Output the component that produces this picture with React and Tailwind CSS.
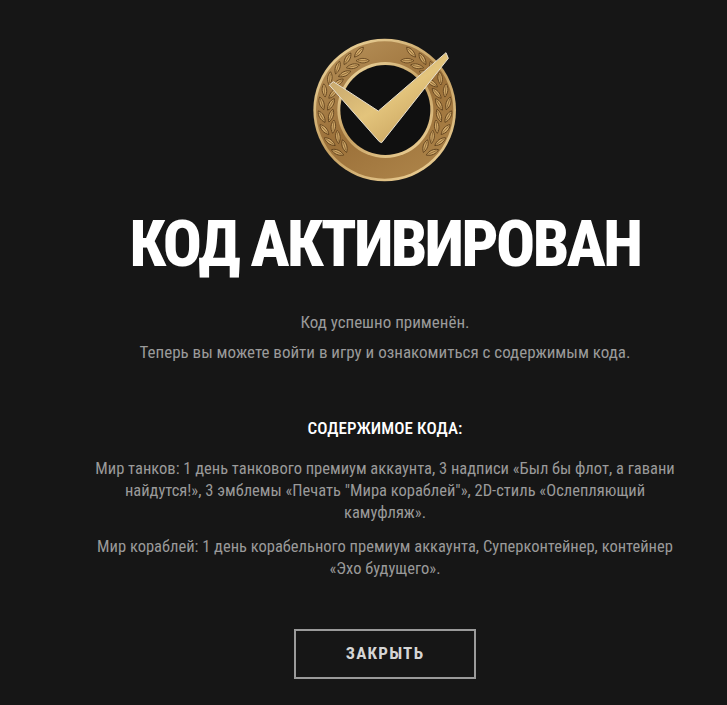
// laurel leaves along the ring, in the 510x480 coordinates of the medal
const leftBranch = []
for (let t = 138; t <= 246; t += 12) {
  const rad = (t * Math.PI) / 180
  for (const side of [-1, 1]) {
    const r = 176 + side * 14
    leftBranch.push({ x: 254 + r * Math.cos(rad), y: 240 + r * Math.sin(rad), rot: t - 180 - side * 24 })
  }
}
const rightBranch = leftBranch.map((l) => ({ x: 510 - l.x, y: l.y, rot: -l.rot }))

function Medal() {
  return (
    <svg width="170" height="160" viewBox="0 0 510 480" className="block">
      <defs>
        <linearGradient id="rim" x1="0.15" y1="0" x2="0.85" y2="1">
          <stop offset="0" stopColor="#ecd49c" />
          <stop offset="0.5" stopColor="#c59f60" />
          <stop offset="1" stopColor="#edd197" />
        </linearGradient>
        <linearGradient id="ring" x1="0.2" y1="0" x2="0.8" y2="1">
          <stop offset="0" stopColor="#b58f57" />
          <stop offset="0.5" stopColor="#9b7039" />
          <stop offset="1" stopColor="#ad8449" />
        </linearGradient>
        <linearGradient id="tick" x1="0.1" y1="0.1" x2="0.8" y2="0.9">
          <stop offset="0" stopColor="#c2a26a" />
          <stop offset="0.55" stopColor="#e3c47c" />
          <stop offset="1" stopColor="#c9a45f" />
        </linearGradient>
      </defs>
      <circle cx="254" cy="240" r="214" fill="url(#rim)" />
      <circle cx="254" cy="240" r="206" fill="url(#ring)" />
      {[...leftBranch, ...rightBranch].map((l, i) => (
        <g key={i} transform={`translate(${l.x} ${l.y}) rotate(${l.rot})`}>
          <path d="M0,-20 C9,-9 9,7 0,20 C-9,7 -9,-9 0,-20 Z" fill="#cfa868" stroke="#5e3f1b" strokeWidth="2.5" />
          <path d="M0,-14 L0,14" stroke="#7a5527" strokeWidth="2" />
        </g>
      ))}
      <circle cx="256" cy="240" r="144" fill="url(#rim)" />
      <circle cx="256" cy="240" r="135" fill="#101010" />
      <polygon points="88,165 100,155 235,243 438,68 445,85 245,338 238,335" fill="url(#tick)" stroke="#e8e0d0" strokeWidth="3" strokeLinejoin="round" />
    </svg>
  )
}

export default function App() {
  return (
    <div className="min-h-[705px] bg-[#161616] flex flex-col items-center pl-[43px] pt-[30px] text-center font-['Roboto',sans-serif] [font-stretch:75%]">
      <Medal />
      <h1 className="mt-[16px] text-[65px] leading-[76px] font-extrabold tracking-[-2.6px] text-white whitespace-nowrap">КОД АКТИВИРОВАН</h1>
      <p className="mt-[29px] text-[17px] leading-[22px] text-[#9a9a9a]">Код успешно применён.</p>
      <p className="mt-[8px] text-[17px] leading-[22px] text-[#9a9a9a]">Теперь вы можете войти в игру и ознакомиться с содержимым кода.</p>
      <h2 className="mt-[54px] text-[17px] leading-[22px] font-medium tracking-[0.1px] text-white">СОДЕРЖИМОЕ КОДА:</h2>
      <p className="mt-[19px] w-[600px] text-[16.5px] leading-[22px] text-[#9a9a9a]">Мир танков: 1 день танкового премиум аккаунта, 3 надписи «Был бы флот, а гавани найдутся!», 3 эмблемы «Печать "Мира кораблей"», 2D-стиль «Ослепляющий камуфляж».</p>
      <p className="mt-[12px] w-[600px] text-[16.5px] leading-[22px] text-[#9a9a9a]">Мир кораблей: 1 день корабельного премиум аккаунта, Суперконтейнер, контейнер «Эхо будущего».</p>
      <button className="mt-[49px] w-[182px] h-[50px] border-2 border-[#9a9a9a] text-[17px] font-bold tracking-[1.2px] text-[#d5d5d5]">ЗАКРЫТЬ</button>
    </div>
  )
}
